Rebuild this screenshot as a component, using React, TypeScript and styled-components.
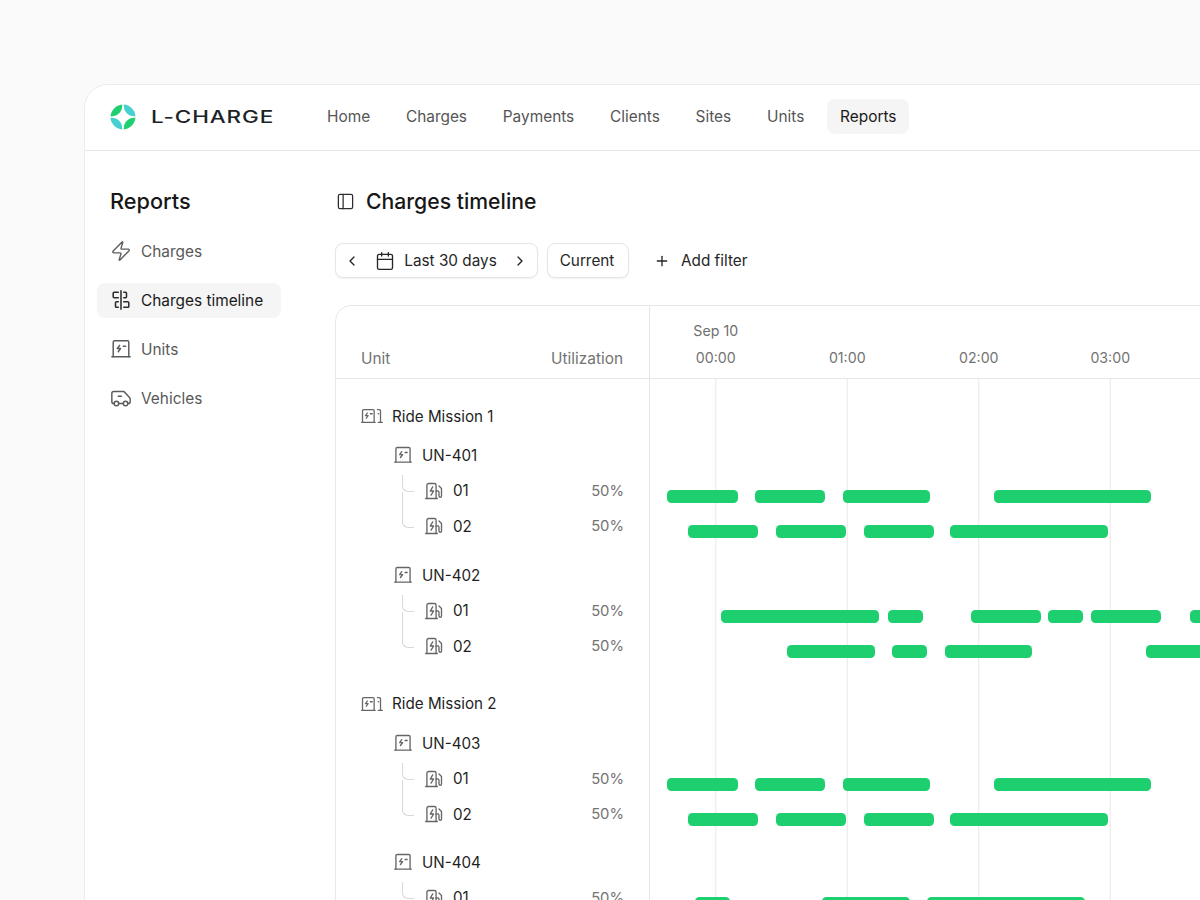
import React from 'react';
import styled, { createGlobalStyle } from 'styled-components';
import { Zap, Calendar, ChevronLeft, ChevronRight, Plus, PanelLeft } from 'lucide-react';

const Global = createGlobalStyle`
  html, body { margin: 0; padding: 0; height: 900px; overflow: hidden; background: #fafafa; }
  body { font-family: Inter, "Liberation Sans", sans-serif; color: #171717; -webkit-font-smoothing: antialiased; }
`;

const Page = styled.div`
  width: 1200px;
  height: 900px;
  padding: 84px 0 0 84px;
  box-sizing: border-box;
  overflow: hidden;
`;
const Card = styled.div`
  width: 1180px;
  height: 900px;
  background: #fff;
  border: 1px solid #ececec;
  border-radius: 24px 24px 0 0;
`;
const Header = styled.header`
  height: 63px;
  padding: 0 0 2px 25px;
  display: flex;
  align-items: center;
  border-bottom: 1px solid #e8e8e8;
`;
const Brand = styled.div`
  display: flex;
  align-items: center;
  gap: 15px;
  width: 163px;
  flex: none;
`;
const Wordmark = styled.span`
  display: inline-block;
  width: 122px;
  font-size: 17px;
  font-weight: 500;
  line-height: 20px;
  letter-spacing: 0.7px;
  color: #1b2327;
  white-space: nowrap;
  transform: scaleX(1.32);
  transform-origin: left center;
`;
const Nav = styled.nav`
  display: flex;
  gap: 9.8px;
  margin-left: 41px;
`;
const NavItem = styled.a<{ $active?: boolean }>`
  height: 35px;
  padding: 0 13px;
  display: flex;
  align-items: center;
  border-radius: 8px;
  font-size: 15.4px;
  color: ${p => (p.$active ? '#1a1a1a' : '#555')};
  background: ${p => (p.$active ? '#f5f5f5' : 'transparent')};
`;
const Content = styled.div`
  display: flex;
`;
const Sidebar = styled.aside`
  width: 184px;
  margin-left: 12px;
  padding-top: 35px;
  flex: none;
`;
const SideTitle = styled.h2`
  margin: 0 0 17.5px 13px;
  font-size: 21.7px;
  line-height: 30px;
  font-weight: 480;
  color: #171717;
`;
const SideList = styled.div`
  display: flex;
  flex-direction: column;
  gap: 14px;
`;
const SideItem = styled.a<{ $active?: boolean }>`
  height: 35px;
  padding-left: 14px;
  display: flex;
  align-items: center;
  gap: 10px;
  border-radius: 8px;
  font-size: 15.4px;
  color: ${p => (p.$active ? '#1a1a1a' : '#595959')};
  background: ${p => (p.$active ? '#f5f5f5' : 'transparent')};
  svg { flex: none; margin: 0 -1px; width: 22px; height: 22px; color: ${p => (p.$active ? '#2e2e2e' : '#5c5c5c')}; }
`;
const Main = styled.main`
  margin-left: 54px;
  padding-top: 35px;
  width: 900px;
  flex: none;
`;
const TitleRow = styled.div`
  display: flex;
  align-items: center;
  gap: 11px;
  height: 30px;
  padding-left: 1px;
  svg { color: #2e2e2e; flex: none; }
`;
const Title = styled.h1`
  margin: 0;
  font-size: 21.2px;
  font-weight: 480;
  line-height: 30px;
  color: #171717;
`;
const Filters = styled.div`
  display: flex;
  align-items: center;
  margin-top: 27px;
  gap: 9px;
`;
const Outlined = styled.div`
  height: 35px;
  box-sizing: border-box;
  display: flex;
  align-items: center;
  border: 1px solid #e6e6e6;
  border-radius: 8px;
  background: #fff;
  box-shadow: 0 1px 2px rgba(0, 0, 0, 0.06);
  font-size: 15.3px;
  color: #262626;
  svg { flex: none; color: #262626; }
`;
const DateRange = styled(Outlined)`
  width: 203px;
  padding: 0 9px 0 8px;
  justify-content: space-between;
`;
const DateLabel = styled.span`
  display: flex;
  align-items: center;
  gap: 9px;
`;
const Current = styled(Outlined)`
  width: 82px;
  padding-right: 2px;
  justify-content: center;
`;
const AddFilter = styled.div`
  display: flex;
  align-items: center;
  gap: 11px;
  margin-left: 16px;
  font-size: 15.3px;
  color: #262626;
  svg { flex: none; }
`;
const Table = styled.section`
  margin-top: 27px;
  border: 1px solid #e8e8e8;
  border-radius: 16px 0 0 0;
  width: 880px;
`;
const TableHead = styled.div`
  display: flex;
  height: 72px;
  border-bottom: 1px solid #e6e6e6;
`;
const LeftHead = styled.div`
  width: 314px;
  flex: none;
  box-sizing: border-box;
  border-right: 1px solid #e6e6e6;
  display: flex;
  justify-content: space-between;
  align-items: flex-end;
  padding: 0 26px 7px 25px;
  font-size: 15.4px;
  line-height: 24px;
  color: #737373;
`;
const RightHead = styled.div`
  display: flex;
  flex-direction: column;
  padding-top: 15px;
`;
const DateCaption = styled.div`
  width: 131.5px;
  text-align: center;
  font-size: 14.2px;
  line-height: 20px;
  color: #6f6f6f;
`;
const Ticks = styled.div`
  display: flex;
  margin-top: 7px;
`;
const Tick = styled.div`
  width: 131.5px;
  flex: none;
  text-align: center;
  font-size: 14.2px;
  line-height: 20px;
  color: #737373;
`;
const TableBody = styled.div`
  display: flex;
`;
const RowsCol = styled.div`
  width: 314px;
  flex: none;
  box-sizing: border-box;
  border-right: 1px solid #e6e6e6;
  padding-top: 19px;
`;
const Timeline = styled.div`
  flex: 1;
  padding-top: 19px;
  background-image: linear-gradient(to right, transparent 65px, #e8e8e8 65px, #e8e8e8 66px, transparent 66px);
  background-size: 131.5px 100%;
  background-position-x: 0.5px;
`;
const Row = styled.div<{ $kind: string; $mt: number }>`
  height: ${p => (p.$kind === 'charger' ? 35.5 : 36)}px;
  margin-top: ${p => p.$mt}px;
  display: flex;
  align-items: center;
  position: relative;
  box-sizing: border-box;
  padding-right: 25px;
  padding-left: ${p => (p.$kind === 'mission' ? 25 : p.$kind === 'unit' ? 57 : 88)}px;
  gap: 9px;
  font-size: 15.2px;
  color: #1f1f1f;
  svg { flex: none; color: #666; }
`;
const Connector = styled.span<{ $first: boolean }>`
  position: absolute;
  left: 66px;
  top: ${p => (p.$first ? 2 : -17)}px;
  height: ${p => (p.$first ? 16 : 35)}px;
  width: 11px;
  border-left: 1px solid #d9d9d9;
  border-bottom: 1px solid #d9d9d9;
  border-bottom-left-radius: 6px;
`;
const Pct = styled.span`
  margin-left: auto;
  font-size: 14.8px;
  color: #737373;
`;
const Lane = styled.div<{ $kind: string; $mt: number }>`
  height: ${p => (p.$kind === 'charger' ? 35.5 : 36)}px;
  margin-top: ${p => p.$mt}px;
  position: relative;
`;
const Bar = styled.div`
  position: absolute;
  top: 16.5px;
  height: 13px;
  border-radius: 4.5px;
  background: #1ecf70;
`;

const Svg: React.FC<{ w?: number; h?: number; vb?: string; sw?: number; children: React.ReactNode }> = ({ w = 20, h = 20, vb = '0 0 24 24', sw = 1.6, children }) => (
  <svg width={w} height={h} viewBox={vb} fill="none" stroke="currentColor" strokeWidth={sw} strokeLinecap="round" strokeLinejoin="round">{children}</svg>
);

const Logo = () => (
  <svg width="26" height="26" viewBox="0 0 26 26">
    <path fill="#1fcf70" d="M12.2 .5V2C12.2 7.5 7.5 12.2 2 12.2H.5C1.2 6 6 1.2 12.2 .5Z" />
    <path fill="#46d0cf" d="M13.8 .5C20 .9 25.1 6 25.5 12.2H24C18.5 12.2 13.8 7.5 13.8 2Z" />
    <path fill="#46d0cf" d="M12.2 25.5C6 25.1 .9 20 .5 13.8H2C7.5 13.8 12.2 18.5 12.2 24Z" />
    <path fill="#1fcf70" d="M13.8 25.5V24C13.8 18.5 18.5 13.8 24 13.8H25.5C24.8 20 20 24.8 13.8 25.5Z" />
  </svg>
);
const TimelineIcon = () => (
  <Svg sw={1.7}>
    <path d="M12 2v20" />
    <path d="M9 3.5H4.5a1 1 0 0 0-1 1v4a1 1 0 0 0 1 1H9" />
    <path d="M9 14H7a1 1 0 0 0-1 1v4a1 1 0 0 0 1 1h2" />
    <path d="M15 3.5h2a1 1 0 0 1 1 1v4a1 1 0 0 1-1 1h-2" />
    <path d="M15 14h4.5a1 1 0 0 1 1 1v4a1 1 0 0 1-1 1H15" />
  </Svg>
);
const UnitIcon: React.FC<{ size?: number }> = ({ size = 20 }) => (
  <Svg w={size} h={size} sw={1.6}>
    <path d="M3.5 20.5V4.5A1.5 1.5 0 0 1 5 3h14a1.5 1.5 0 0 1 1.5 1.5v16" />
    <path d="M2 20.5h20" />
    <path d="M10.5 8 8 11.5h3.5L9 15" />
    <path d="M14.5 9H17" />
  </Svg>
);
const VanIcon = () => (
  <Svg>
    <path d="M4.5 18H4a2 2 0 0 1-2-2V7a2 2 0 0 1 2-2h10.5a2 2 0 0 1 1.6.8l5.4 6a2 2 0 0 1 .5 1.3V16a2 2 0 0 1-2 2h-.5" />
    <path d="M9.5 18h5" />
    <circle cx="7" cy="18" r="2.5" />
    <circle cx="17" cy="18" r="2.5" />
    <path d="M9 10h3.5" />
  </Svg>
);
const MissionIcon = () => (
  <Svg w={22} h={18} vb="0 0 29.3 24" sw={1.7}>
    <path d="M2 20.5V5a1.5 1.5 0 0 1 1.5-1.5h12.5A1.5 1.5 0 0 1 17.5 5v15.5" />
    <path d="M.8 20.5h18" />
    <path d="M8.5 8 6 11.5h3.5L7 15" />
    <path d="M12.5 9h2.5" />
    <path d="M22 3.5h2.5A1.5 1.5 0 0 1 26 5v15.5" />
    <path d="M23 20.5h5.5" />
    <path d="M23 9h.5" />
  </Svg>
);
const ChargerIcon = () => (
  <Svg w={20} h={20} sw={1.6}>
    <path d="M3.5 21V5a2 2 0 0 1 2-2h7a2 2 0 0 1 2 2v16" />
    <path d="M2 21h14" />
    <path d="M10.5 7 7.5 12h4l-3 5" />
    <path d="M18 6l3 3v9a1.5 1.5 0 0 1-3 0v-4a2 2 0 0 0-3.5-1.5" />
  </Svg>
);

type R = { kind: 'mission' | 'unit' | 'charger'; name: string; mt: number; first?: boolean; bars?: [number, number][] };

const A: [number, number][] = [[667.4, 737.6], [755, 825], [843, 930], [994, 1151]];
const B: [number, number][] = [[688, 758], [776, 846], [864, 934], [950, 1108]];

const rows: R[] = [
  { kind: 'mission', name: 'Ride Mission 1', mt: 0 },
  { kind: 'unit', name: 'UN-401', mt: 3 },
  { kind: 'charger', name: '01', mt: 0, first: true, bars: A },
  { kind: 'charger', name: '02', mt: 0, bars: B },
  { kind: 'unit', name: 'UN-402', mt: 13 },
  { kind: 'charger', name: '01', mt: 0, first: true, bars: [[721, 879], [888, 923], [971, 1041], [1047.5, 1083], [1091, 1161], [1190, 1260]] },
  { kind: 'charger', name: '02', mt: 0, bars: [[787, 875], [892, 927], [945, 1032], [1146, 1260]] },
  { kind: 'mission', name: 'Ride Mission 2', mt: 21.5 },
  { kind: 'unit', name: 'UN-403', mt: 3.5 },
  { kind: 'charger', name: '01', mt: 0, first: true, bars: A },
  { kind: 'charger', name: '02', mt: 0, bars: B },
  { kind: 'unit', name: 'UN-404', mt: 12 },
  { kind: 'charger', name: '01', mt: 0, first: true, bars: [[695, 730], [822, 910], [927, 1085]] },
];

const TL_X = 650;

export default function App() {
  return (
    <Page>
      <Global />
      <Card>
        <Header>
          <Brand><Logo /><Wordmark>L-CHARGE</Wordmark></Brand>
          <Nav>
            {['Home', 'Charges', 'Payments', 'Clients', 'Sites', 'Units'].map(n => <NavItem key={n}>{n}</NavItem>)}
            <NavItem $active>Reports</NavItem>
          </Nav>
        </Header>
        <Content>
          <Sidebar>
            <SideTitle>Reports</SideTitle>
            <SideList>
              <SideItem><Zap size={22} strokeWidth={1.5} />Charges</SideItem>
              <SideItem $active><TimelineIcon />Charges timeline</SideItem>
              <SideItem><UnitIcon />Units</SideItem>
              <SideItem><VanIcon />Vehicles</SideItem>
            </SideList>
          </Sidebar>
          <Main>
            <TitleRow><PanelLeft size={19} strokeWidth={1.6} /><Title>Charges timeline</Title></TitleRow>
            <Filters>
              <DateRange>
                <ChevronLeft size={16} strokeWidth={2} />
                <DateLabel><Calendar size={20} strokeWidth={1.6} />Last 30 days</DateLabel>
                <ChevronRight size={16} strokeWidth={2} />
              </DateRange>
              <Current>Current</Current>
              <AddFilter><Plus size={16} strokeWidth={2} />Add filter</AddFilter>
            </Filters>
            <Table>
              <TableHead>
                <LeftHead><span>Unit</span><span>Utilization</span></LeftHead>
                <RightHead>
                  <DateCaption>Sep 10</DateCaption>
                  <Ticks>
                    {['00:00', '01:00', '02:00', '03:00'].map(t => <Tick key={t}>{t}</Tick>)}
                  </Ticks>
                </RightHead>
              </TableHead>
              <TableBody>
                <RowsCol>
                  {rows.map((r, i) => (
                    <Row key={i} $kind={r.kind} $mt={r.mt}>
                      {r.kind === 'charger' && <Connector $first={!!r.first} />}
                      {r.kind === 'mission' && <MissionIcon />}
                      {r.kind === 'unit' && <UnitIcon />}
                      {r.kind === 'charger' && <ChargerIcon />}
                      <span>{r.name}</span>
                      {r.kind === 'charger' && <Pct>50%</Pct>}
                    </Row>
                  ))}
                </RowsCol>
                <Timeline>
                  {rows.map((r, i) => (
                    <Lane key={i} $kind={r.kind} $mt={r.mt}>
                      {r.bars?.map(([a, b]) => (
                        <Bar key={a} style={{ left: a - TL_X, width: b - a }} />
                      ))}
                    </Lane>
                  ))}
                </Timeline>
              </TableBody>
            </Table>
          </Main>
        </Content>
      </Card>
    </Page>
  );
}
